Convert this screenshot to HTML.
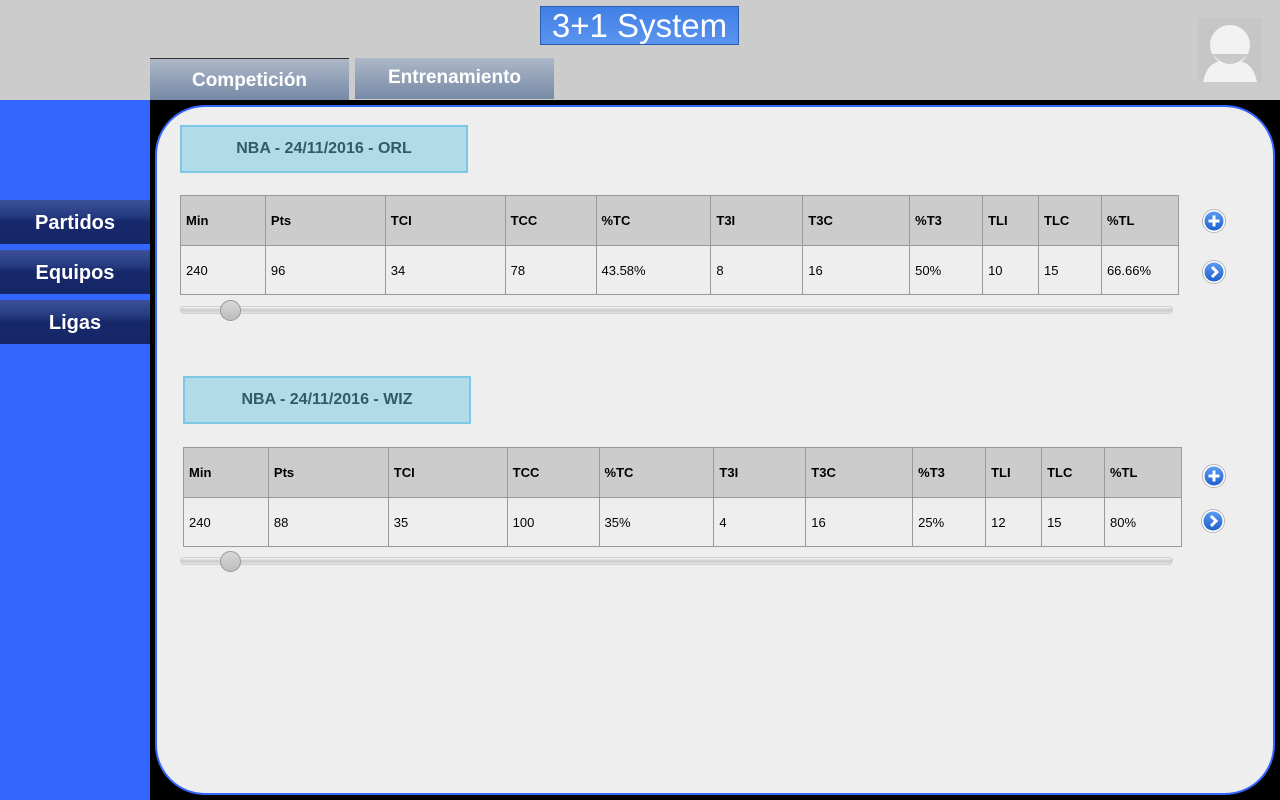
<!DOCTYPE html>
<html><head><meta charset="utf-8"><style>
*{margin:0;padding:0;box-sizing:border-box}
body{width:1280px;height:800px;background:#cccccc;position:relative;overflow:hidden;font-family:"Liberation Sans",Arial,sans-serif}
.abs{position:absolute}
.title{left:540px;top:6px;width:199px;height:39px;background:linear-gradient(#3f7fe6,#5b94ee);border:1px solid #2a5bb0;color:#fff;font-size:33px;text-align:center;line-height:38px;font-family:"Liberation Sans",sans-serif;white-space:nowrap;overflow:hidden}
.tab{top:58px;width:199px;height:42px;background:linear-gradient(#adb8c8,#7689a6);color:#fff;font-weight:bold;font-size:19px;text-align:center}
.side{left:0;top:100px;width:150px;height:700px;background:#3366ff}
.btn{left:0;width:150px;height:44px;background:linear-gradient(#3d519a 0%,#263b80 35%,#16286a 50%,#152767 100%);color:#fff;font-weight:bold;font-size:20px;text-align:center;line-height:46px}
.main{left:150px;top:100px;width:1130px;height:700px;background:#000}
.panel{left:155px;top:105px;width:1120px;height:690px;background:#eeeeee;border:2px solid #3366ff;border-radius:50px}
.hdr{width:288px;height:48px;background:#b0dcea;border:2px solid #7ec8e6;color:#335a66;font-weight:bold;font-size:16px;text-align:center;line-height:44px}
table{position:absolute;border-collapse:collapse;font-size:13px;color:#000}
td{border:1px solid #999;padding-left:5px;height:50px;vertical-align:middle}
tr.h td{background:#cccccc;font-weight:bold;height:50px}
tr.d td{height:49px}
.track{height:8px;border-radius:4px;background:linear-gradient(#f6f6f6,#c9c9c9 50%,#e4e4e4);border:1px solid #d0d0d0}
.thumb{width:21px;height:21px;border-radius:50%;background:linear-gradient(#d8d8d8,#bdbdbd);border:1px solid #999}
</style></head><body>
<div class="abs title">3+1 System</div>
<div class="abs tab" style="left:150px;border-top:1px solid #333;line-height:44px">Competición</div>
<div class="abs tab" style="left:355px;height:41px;line-height:40px">Entrenamiento</div>
<div class="abs" style="left:1198px;top:18px;width:64px;height:64px;background:#c6c6c6">
<svg width="64" height="64" viewBox="0 0 64 64"><circle cx="32" cy="27" r="20" fill="#f2f2f2"/><path d="M5 64 Q9 44 24 43 A12 8 0 0 0 40 43 Q55 44 59 64Z" fill="#f2f2f2"/><path d="M14 36 Q32 56 50 36 Z" fill="#c9c9c9"/></svg></div>
<div class="abs side"></div>
<div class="abs btn" style="top:200px">Partidos</div>
<div class="abs btn" style="top:250px">Equipos</div>
<div class="abs btn" style="top:300px">Ligas</div>
<div class="abs main"></div>
<div class="abs panel"></div>

<div class="abs hdr" style="left:180px;top:125px">NBA - 24/11/2016 - ORL</div>
<table style="left:180px;top:195px;width:999px">
<colgroup><col style="width:85px"><col style="width:120px"><col style="width:120px"><col style="width:91px"><col style="width:115px"><col style="width:92px"><col style="width:107px"><col style="width:73px"><col style="width:56px"><col style="width:63px"><col style="width:77px"></colgroup>
<tr class="h"><td>Min</td><td>Pts</td><td>TCI</td><td>TCC</td><td>%TC</td><td>T3I</td><td>T3C</td><td>%T3</td><td>TLI</td><td>TLC</td><td>%TL</td></tr>
<tr class="d"><td>240</td><td>96</td><td>34</td><td>78</td><td>43.58%</td><td>8</td><td>16</td><td>50%</td><td>10</td><td>15</td><td>66.66%</td></tr>
</table>
<div class="abs track" style="left:180px;top:306px;width:993px"></div>
<div class="abs thumb" style="left:220px;top:300px"></div>

<div class="abs hdr" style="left:183px;top:376px">NBA - 24/11/2016 - WIZ</div>
<table style="left:183px;top:447px;width:999px">
<colgroup><col style="width:85px"><col style="width:120px"><col style="width:119px"><col style="width:92px"><col style="width:115px"><col style="width:92px"><col style="width:107px"><col style="width:73px"><col style="width:56px"><col style="width:63px"><col style="width:77px"></colgroup>
<tr class="h"><td>Min</td><td>Pts</td><td>TCI</td><td>TCC</td><td>%TC</td><td>T3I</td><td>T3C</td><td>%T3</td><td>TLI</td><td>TLC</td><td>%TL</td></tr>
<tr class="d"><td>240</td><td>88</td><td>35</td><td>100</td><td>35%</td><td>4</td><td>16</td><td>25%</td><td>12</td><td>15</td><td>80%</td></tr>
</table>
<div class="abs track" style="left:180px;top:557px;width:993px"></div>
<div class="abs thumb" style="left:220px;top:551px"></div>

<svg class="abs" style="left:0;top:0" width="1280" height="800">
<defs><linearGradient id="g" x1="0" y1="0" x2="0" y2="1"><stop offset="0" stop-color="#5d9cf0"/><stop offset="1" stop-color="#1f5fcf"/></linearGradient></defs>
<g transform="translate(1214,221)"><circle r="11.5" fill="#fff" stroke="#aaa" stroke-width="0.8"/><circle r="9.5" fill="url(#g)"/><path d="M-5.5 0H5.5M0 -5.5V5.5" stroke="#fff" stroke-width="3"/></g>
<g transform="translate(1214,272)"><circle r="11.5" fill="#fff" stroke="#aaa" stroke-width="0.8"/><circle r="9.5" fill="url(#g)"/><path d="M-2 -5L3 0L-2 5" stroke="#fff" stroke-width="3" fill="none"/></g>
<g transform="translate(1214,476)"><circle r="11.5" fill="#fff" stroke="#aaa" stroke-width="0.8"/><circle r="9.5" fill="url(#g)"/><path d="M-5.5 0H5.5M0 -5.5V5.5" stroke="#fff" stroke-width="3"/></g>
<g transform="translate(1213,521)"><circle r="11.5" fill="#fff" stroke="#aaa" stroke-width="0.8"/><circle r="9.5" fill="url(#g)"/><path d="M-2 -5L3 0L-2 5" stroke="#fff" stroke-width="3" fill="none"/></g>
</svg>
</body></html>
